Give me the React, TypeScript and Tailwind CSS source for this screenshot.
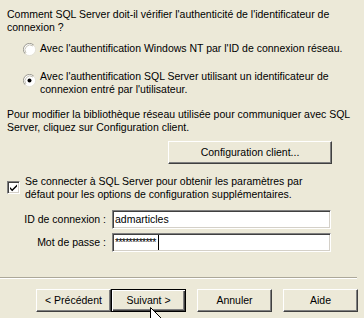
import React from 'react';

const Radio: React.FC<{ checked?: boolean; className?: string }> = ({ checked, className }) => (
  <svg width="13" height="13" viewBox="0 0 13 13" className={`shrink-0 ${className ?? ''}`}>
    <circle cx="6.5" cy="6.5" r="6" fill="#fff" />
    <path d="M2.2 10.8 A6 6 0 0 1 10.8 2.2" fill="none" stroke="#9a9890" strokeWidth="1" />
    <path d="M3 10 A5 5 0 0 1 10 3" fill="none" stroke="#c8c5b8" strokeWidth="1" />
    <path d="M10.8 2.2 A6 6 0 0 1 2.2 10.8" fill="none" stroke="#e4e2d8" strokeWidth="1" />
    {checked && <circle cx="6.5" cy="6.5" r="2" fill="#000" />}
  </svg>
);

const Checkbox: React.FC<{ className?: string }> = ({ className }) => (
  <div
    className={`w-[13px] h-[13px] shrink-0 bg-white border border-t-[#808080] border-l-[#808080] border-r-white border-b-white shadow-[inset_1px_1px_0_#404040,inset_-1px_-1px_0_#d4d0c8] flex items-center justify-center ${className ?? ''}`}
  >
    <svg width="9" height="9" viewBox="0 0 9 9">
      <path d="M1 4 L3.2 6.2 L8 1.4 L8 3.4 L3.2 8.2 L1 6 Z" fill="#000" />
    </svg>
  </div>
);

const raised =
  'bg-[#ece9d8] border border-t-white border-l-white border-r-[#404040] border-b-[#404040] shadow-[inset_-1px_-1px_0_#808080]';

const sunken =
  'bg-white border border-t-[#808080] border-l-[#808080] border-r-white border-b-white shadow-[inset_1px_1px_0_#404040,inset_-1px_-1px_0_#d4d0c8]';

const App: React.FC = () => {
  return (
    <div className="relative w-[364px] h-[318px] overflow-hidden bg-[#ece9d8] text-black font-['Liberation_Sans',Arial,sans-serif] text-[10.5px] leading-[13px]">
      <div className="flex flex-col">
        {/* Question */}
        <p className="ml-[7px] mt-[8px]">
          Comment SQL Server doit-il vérifier l'authenticité de l'identificateur de
          <br />
          connexion ?
        </p>

        {/* Options */}
        <div className="ml-[23px] mt-[8px] flex items-start gap-[4px]">
          <Radio className="mt-[1px]" />
          <span>Avec l'authentification Windows NT par l'ID de connexion réseau.</span>
        </div>
        <div className="ml-[23px] mt-[14px] flex items-start gap-[4px]">
          <Radio checked className="mt-[4px]" />
          <span>
            Avec l'authentification SQL Server utilisant un identificateur de
            <br />
            connexion entré par l'utilisateur.
          </span>
        </div>

        <p className="ml-[7px] mt-[12px]">
          Pour modifier la bibliothèque réseau utilisée pour communiquer avec SQL
          <br />
          Server, cliquez sur Configuration client.
        </p>

        <div className={`ml-[168px] mt-[7px] w-[164px] h-[23px] flex items-center justify-center ${raised}`}>
          Configuration client...
        </div>

        {/* Checkbox */}
        <div className="ml-[7px] mt-[11px] flex items-start gap-[5px]">
          <Checkbox className="mt-[6px]" />
          <span>
            Se connecter à SQL Server pour obtenir les paramètres par
            <br />
            défaut pour les options de configuration supplémentaires.
          </span>
        </div>

        {/* Login fields */}
        <div className="mt-[9px] flex items-center">
          <span className="w-[106px] text-right">ID de connexion :</span>
          <div className={`ml-[6px] w-[219px] h-[19px] flex items-center pl-[2px] ${sunken}`}>admarticles</div>
        </div>
        <div className="mt-[4px] flex items-center">
          <span className="w-[106px] text-right">Mot de passe :</span>
          <div className={`ml-[6px] w-[219px] h-[19px] flex items-center pl-[2px] ${sunken}`}>
            <span className="tracking-[-0.7px]">************</span>
            <span className="ml-[2px] w-px h-[15px] bg-black" />
          </div>
        </div>

        {/* Separator */}
        <div className="mt-[25px] w-[357px] border-t border-t-[#aca899] border-b border-b-white" />

        {/* Wizard buttons */}
        <div className="ml-[36px] mt-[10px] flex">
          <div className={`w-[75px] h-[23px] flex items-center justify-center ${raised}`}>&lt; Précédent</div>
          <div className="w-[75px] h-[23px] flex items-center justify-center bg-[#ece9d8] border border-black shadow-[inset_1px_1px_0_#fff,inset_-1px_-1px_0_#404040,inset_-2px_-2px_0_#808080]">
            Suivant &gt;
          </div>
          <div className={`ml-[11px] w-[75px] h-[23px] flex items-center justify-center ${raised}`}>Annuler</div>
          <div className={`ml-[11px] w-[75px] h-[23px] flex items-center justify-center ${raised}`}>Aide</div>
        </div>
      </div>

      {/* Mouse pointer */}
      <svg width="13" height="20" viewBox="0 0 13 20" className="absolute left-[150px] top-[307px]">
        <path d="M0.5 0.5 L0.5 16 L4.2 12.4 L6.7 18.3 L9 17.3 L6.6 11.6 L11.6 11.6 Z" fill="#fff" stroke="#000" strokeWidth="1" strokeLinejoin="miter" />
      </svg>
    </div>
  );
};

export default App;
